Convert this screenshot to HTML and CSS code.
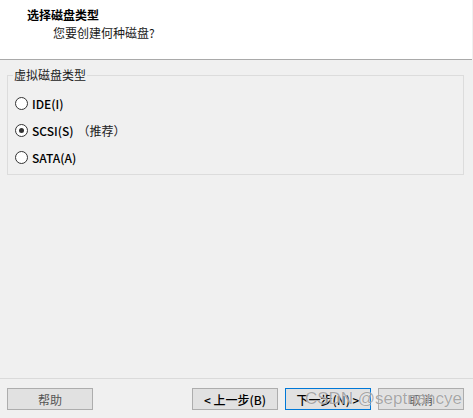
FILE: index.html
```html
<html>
<head>
<title>新建虚拟机向导</title>
<link rel="stylesheet" href="styles.css">
</head>
<body>
<div class="wizard">
  <div class="header">
    <div class="title">选择磁盘类型</div>
    <div class="subtitle">您要创建何种磁盘?</div>
  </div>

  <div class="content">
    <fieldset class="group">
      <legend>虚拟磁盘类型</legend>
      <label class="option"><span class="radio"></span>IDE(I)</label>
      <label class="option"><span class="radio checked"></span>SCSI(S)<span class="hint">（推荐）</span></label>
      <label class="option"><span class="radio"></span>SATA(A)</label>
    </fieldset>
  </div>

  <div class="footer">
    <button type="button" class="btn dim">帮助</button>
    <span class="spacer"></span>
    <button type="button" class="btn">&lt; 上一步(B)</button>
    <button type="button" class="btn focus">下一步(N) &gt;</button>
    <button type="button" class="btn dim">取消</button>
  </div>

  <div class="watermark">CSDN @septnancye</div>
</div>
</body>
</html>
```

FILE: styles.css
```css
body {
  margin: 0;
  background-color: #f0f0f0;
  font-family: "Noto Sans CJK SC", "Noto Sans", sans-serif;
  font-size: 12px;
  color: #000000;
}
.wizard {
  position: relative;
  width: 473px;
  height: 418px;
  display: flex;
  flex-direction: column;
  overflow: hidden;
}
.header {
  height: 59px;
  background-color: #ffffff;
  border-bottom: 1px solid #a9a9a9;
  box-sizing: content-box;
  padding-left: 27px;
  margin-right: 1px;
}
.title {
  font-weight: bold;
  line-height: 16px;
  padding-top: 7px;
}
.subtitle {
  line-height: 16px;
  padding-top: 2px;
  padding-left: 26px;
  color: #1a1a1a;
}
.content {
  flex: 1;
  padding: 7px 9px 0 7px;
}
.group {
  margin: 0;
  padding: 7px 5px 3px 5px;
  border: 1px solid #dcdcdc;
  min-width: 0;
}
.group legend {
  padding: 0 1px;
  line-height: 16px;
  color: #1a1a1a;
}
.option {
  display: flex;
  align-items: center;
  height: 27px;
  padding-left: 2px;
  font-weight: 500;
}
.radio {
  width: 11px;
  height: 11px;
  border: 1px solid #333333;
  border-radius: 50%;
  background-color: #ffffff;
  margin-right: 4px;
  display: flex;
  align-items: center;
  justify-content: center;
}
.radio.checked::after {
  content: "";
  width: 5px;
  height: 5px;
  border-radius: 50%;
  background-color: #333333;
}
.hint {
  margin-left: 4px;
  font-weight: normal;
  color: #222222;
}
.footer {
  display: flex;
  align-items: flex-start;
  gap: 7px;
  height: 30px;
  border-top: 1px solid #dadada;
  padding: 9px 9px 0 7px;
}
.spacer {
  flex: 1;
}
.btn {
  width: 86px;
  height: 22px;
  margin: 0;
  padding: 0;
  border: 1px solid #adadad;
  background-color: #e1e1e1;
  font-family: "Noto Sans CJK SC", "Noto Sans", sans-serif;
  font-size: 12px;
  font-weight: 500;
  color: #000000;
}
.btn.dim {
  color: #555555;
  font-weight: normal;
}
.btn.focus {
  border-color: #0078d7;
}
.watermark {
  position: absolute;
  right: 11px;
  top: 389px;
  font-family: "Liberation Sans", sans-serif;
  font-size: 17px;
  color: rgba(110, 110, 110, 0.6);
  text-shadow: 0 0 1px #ffffff;
  pointer-events: none;
}
```
